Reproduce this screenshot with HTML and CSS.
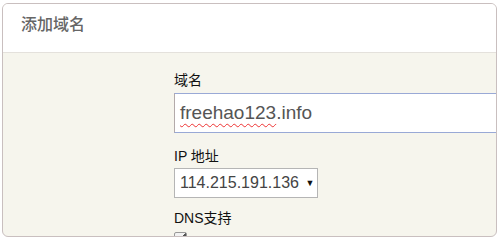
FILE: index.html
```html
<!DOCTYPE html>
<html lang="zh-CN">
<head>
  <meta charset="UTF-8">
  <title>添加域名</title>
  <link rel="stylesheet" href="styles.css">
</head>
<body>
  <div class="panel">
    <div class="panel-head">添加域名</div>
    <div class="panel-body">
      <div class="group">
        <label class="label">域名</label>
        <div class="input"><span class="typo">freehao123</span>.info</div>
      </div>
      <div class="group">
        <label class="label">IP 地址</label>
        <div class="select">114.215.191.136 <span class="caret">&#9660;</span></div>
      </div>
      <div class="group">
        <label class="label">DNS支持</label>
        <span class="check"></span>
      </div>
    </div>
  </div>
</body>
</html>
```

FILE: styles.css
```css
body {
  margin: 0;
  padding: 3px 3px 0 2px;
  background: #fff;
  font-family: "Liberation Sans", "Noto Sans CJK SC", Arial, sans-serif;
}
.panel {
  height: 232px;
  border: 1px solid #c9bfbf;
  border-radius: 6px;
  overflow: hidden;
  background: #f6f5ed;
}
.panel-head {
  height: 48px;
  padding-left: 18px;
  background: #fff;
  border-bottom: 1px solid #e4e1dc;
  color: #666;
  font-size: 16px;
  font-weight: 500;
  line-height: 42px;
}
.panel-body {
  padding: 17px 0 0 171px;
}
.group {
  display: flex;
  flex-direction: column;
  align-items: flex-start;
  margin-bottom: 10px;
}
.group:first-child {
  margin-bottom: 13px;
}
.label {
  font-size: 14px;
  line-height: 20px;
  color: #111;
  margin-bottom: 2px;
}
.group:first-child .label {
  margin-bottom: 3px;
}
.input {
  box-sizing: border-box;
  width: 360px;
  height: 40px;
  border: 1px solid #99a9d6;
  border-left-color: #b3aaaa;
  background: #fff;
  color: #555;
  font-size: 19px;
  line-height: 38px;
  padding-left: 5px;
}
.typo {
  text-decoration: underline wavy #e33 1px;
  text-underline-offset: 4px;
  text-decoration-skip-ink: none;
}
.select {
  box-sizing: border-box;
  width: 144px;
  height: 30px;
  border: 1px solid #b5b5b5;
  background: #fff;
  color: #444;
  font-size: 16px;
  line-height: 28px;
  padding-left: 5px;
  white-space: nowrap;
}
.caret {
  font-size: 9px;
  color: #111;
  vertical-align: 2px;
  margin-left: 2px;
}
.check {
  display: block;
  width: 11px;
  height: 11px;
  margin-top: 2px;
  border: 1px solid #999;
  border-radius: 2px;
  background: linear-gradient(135deg, #f2f2f2 50%, #555 50%, #555 60%, #d8d8d8 60%);
}
```
